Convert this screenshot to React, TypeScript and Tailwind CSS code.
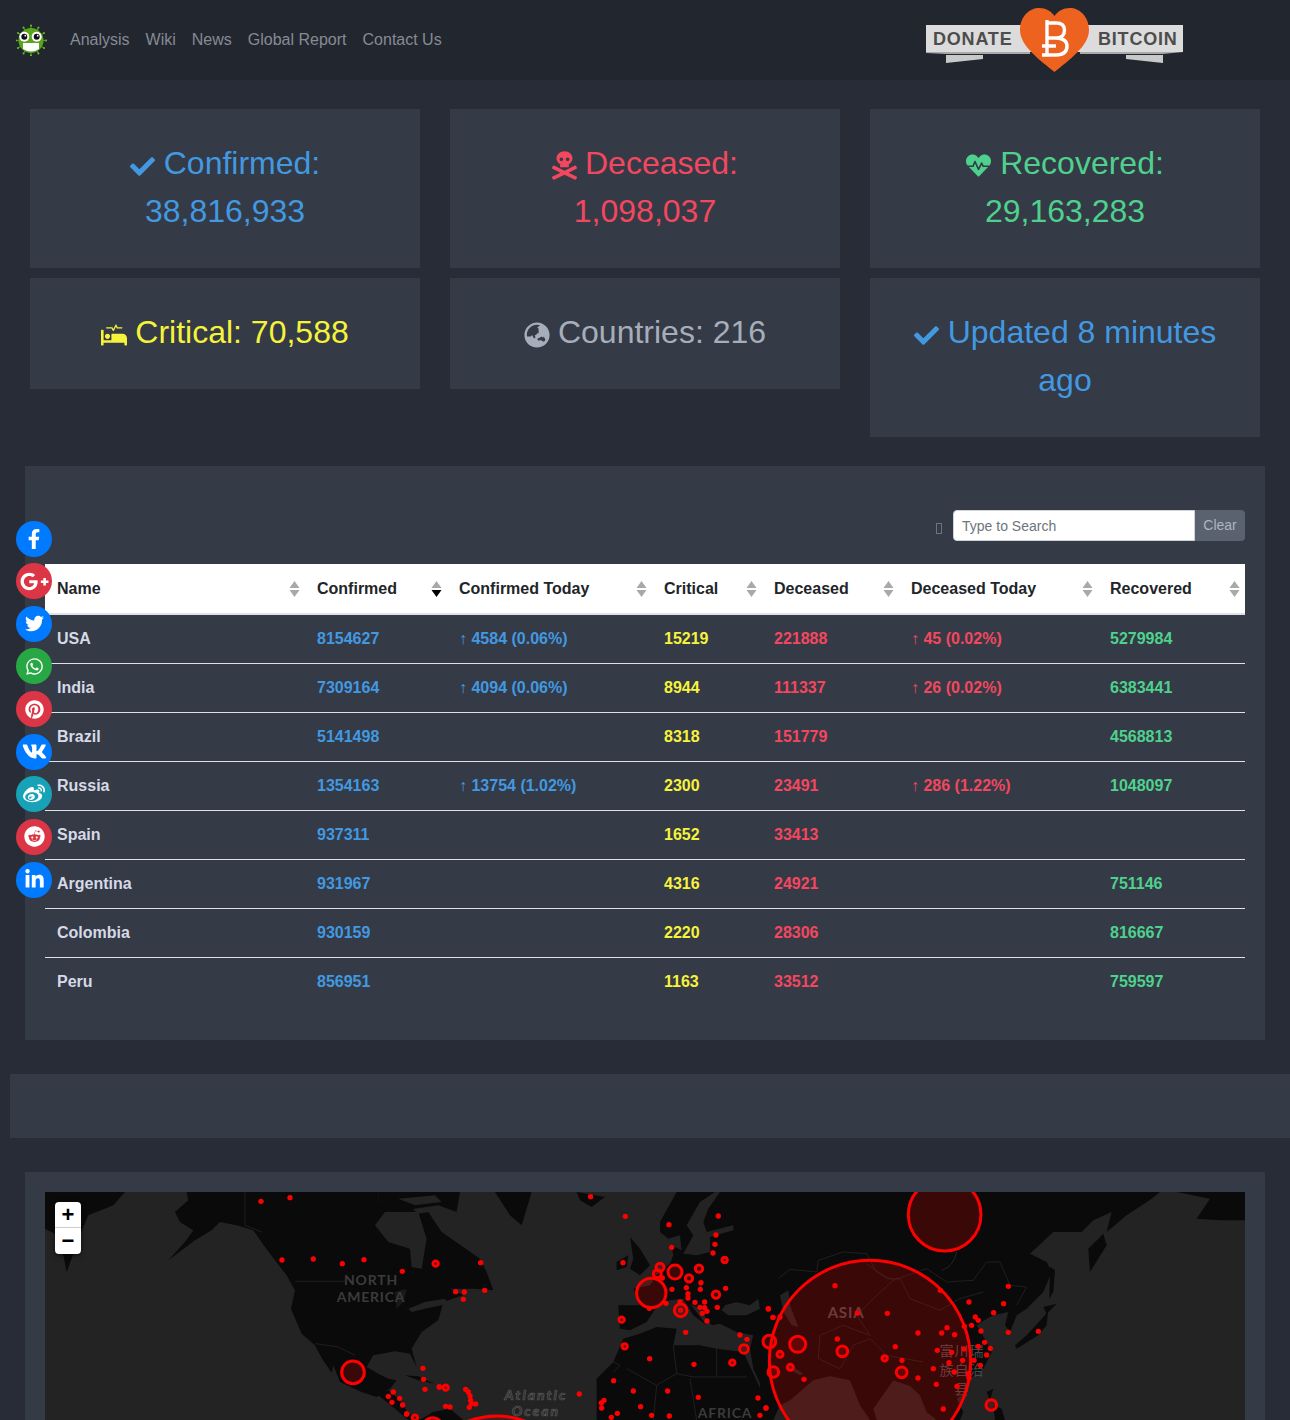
// App.tsx
import type { ReactNode } from "react";
import {
  FaCheck,
  FaFacebookF,
  FaGlobeAsia,
  FaGooglePlusG,
  FaHeartbeat,
  FaLinkedinIn,
  FaPinterest,
  FaProcedures,
  FaReddit,
  FaSkullCrossbones,
  FaTwitter,
  FaVk,
  FaWeibo,
  FaWhatsapp,
} from "react-icons/fa";

const socials = [
  { icon: <FaFacebookF size={20} />, bg: "bg-[#007bff]" },
  { icon: <FaGooglePlusG size={29} />, bg: "bg-[#dc3545]" },
  { icon: <FaTwitter size={19} />, bg: "bg-[#007bff]" },
  { icon: <FaWhatsapp size={19} />, bg: "bg-[#28a745]" },
  { icon: <FaPinterest size={19} />, bg: "bg-[#dc3545]" },
  { icon: <FaVk size={25} />, bg: "bg-[#007bff]" },
  { icon: <FaWeibo size={22} />, bg: "bg-[#17a2b8]" },
  { icon: <FaReddit size={21} />, bg: "bg-[#dc3545]" },
  { icon: <FaLinkedinIn size={21} />, bg: "bg-[#007bff]" },
];

const rows = [
  ["USA", "8154627", "↑ 4584 (0.06%)", "15219", "221888", "↑ 45 (0.02%)", "5279984"],
  ["India", "7309164", "↑ 4094 (0.06%)", "8944", "111337", "↑ 26 (0.02%)", "6383441"],
  ["Brazil", "5141498", "", "8318", "151779", "", "4568813"],
  ["Russia", "1354163", "↑ 13754 (1.02%)", "2300", "23491", "↑ 286 (1.22%)", "1048097"],
  ["Spain", "937311", "", "1652", "33413", "", ""],
  ["Argentina", "931967", "", "4316", "24921", "", "751146"],
  ["Colombia", "930159", "", "2220", "28306", "", "816667"],
  ["Peru", "856951", "", "1163", "33512", "", "759597"],
];

const headers = [
  { label: "Name", w: "w-[260px]" },
  { label: "Confirmed", w: "w-[142px]", active: true },
  { label: "Confirmed Today", w: "w-[205px]" },
  { label: "Critical", w: "w-[110px]" },
  { label: "Deceased", w: "w-[137px]" },
  { label: "Deceased Today", w: "w-[199px]" },
  { label: "Recovered", w: "w-[147px]" },
];

const cellColors = [
  "text-[#d6d9e6]",
  "text-[#4299e1]",
  "text-[#4299e1]",
  "text-[#f6f33c]",
  "text-[#f3475f]",
  "text-[#f3475f]",
  "text-[#4fd18e]",
];

// marker positions are in the 3x crop space of each map section
const dotsWest = [
  [648, 28], [735, 17], [711, 204], [805, 201], [892, 215], [957, 203], [1072, 238],
  [1134, 529], [1136, 562], [1140, 592], [1183, 585], [1030, 613], [1045, 600],
  [1064, 619], [1041, 631], [1073, 639], [1085, 666],
];
const dotsMid = [
  [572, 14], [676, 73], [807, 98], [955, 72], [948, 129], [945, 157], [939, 183], [815, 166],
  [669, 212], [242, 212], [167, 299], [193, 300], [254, 295], [190, 322], [538, 606],
  [749, 500], [641, 566], [700, 597], [803, 597], [895, 616], [882, 517], [1020, 429],
  [1041, 442], [1105, 350], [1119, 376], [722, 644], [755, 670], [808, 672], [652, 664],
  [612, 625], [604, 633], [605, 648], [634, 676], [1074, 618], [1098, 648], [1080, 670],
  [197, 592], [205, 600], [210, 612], [212, 625], [214, 635], [208, 646], [227, 636],
  [137, 643], [150, 645], [118, 585], [816, 292], [859, 287], [901, 292], [903, 272],
  [885, 331], [914, 330], [900, 346], [914, 347], [921, 358], [907, 364], [952, 346],
  [977, 289], [921, 387], [857, 421], [864, 305], [864, 318], [798, 334], [840, 330],
  [787, 258], [748, 349], [20, 666],
];
const dotsEast = [
  [225, 281], [292, 363], [382, 364], [25, 351], [39, 376], [60, 375], [232, 441], [132, 562],
  [406, 464], [426, 505], [474, 423], [545, 423], [561, 407], [584, 428], [532, 475],
  [575, 481], [612, 471], [655, 463], [674, 451], [691, 469], [680, 489], [642, 505],
  [661, 520], [608, 505], [567, 512], [583, 540], [520, 530], [474, 558], [529, 577],
  [591, 583], [550, 651], [625, 545], [627, 557], [613, 403], [635, 400], [663, 417],
  [646, 375], [655, 385], [701, 362], [731, 335], [745, 283], [627, 330], [541, 295],
  [745, 421], [835, 418], [18, 648],
];
const ringsWest = [[924, 541, 34], [1172, 215, 8], [1110, 677, 8], [1163, 705, 28]];
const ringsMid = [
  [754, 303, 44], [825, 240, 21], [780, 226, 12], [772, 245, 12], [867, 259, 11], [897, 230, 11],
  [974, 204, 8], [948, 308, 11], [842, 355, 19], [842, 355, 3], [665, 383, 8], [674, 463, 8],
  [997, 512, 8], [137, 587, 8], [1032, 471, 13], [290, 912, 240],
];
const ringsEast = [
  [330, 507, 302], [554, 68, 109], [113, 457, 24], [247, 478, 16], [28, 449, 19], [40, 540, 16],
  [425, 541, 16], [694, 639, 16], [374, 499, 8], [91, 526, 9], [60, 487, 9],
];

function Card({ color, className = "", children }: { color: string; className?: string; children: ReactNode }) {
  return (
    <div className={`bg-[#343a46] px-4 pt-[30px] pb-[33px] text-center text-[32px] leading-[48px] ${color} ${className}`}>
      {children}
    </div>
  );
}

function SortArrows({ active }: { active?: boolean }) {
  return (
    <svg width="11" height="16" viewBox="0 0 11 16" className="absolute right-[5.5px] top-[17px]">
      <path d="M5.5 0 L10.5 7 H0.5 Z" fill="#a9a9a9" />
      <path d="M5.5 16 L10.5 9 H0.5 Z" fill={active ? "#000" : "#a9a9a9"} />
    </svg>
  );
}

function VirusLogo() {
  const spikes = [0, 30, 60, 90, 120, 150, 180, 210, 240, 270, 300, 330];
  return (
    <svg width="32" height="32" viewBox="0 0 32 32">
      {spikes.map((a) => (
        <g key={a} transform={`rotate(${a} 15 16.5)`}>
          <rect x="14.4" y="1" width="1.2" height="4" fill="#4d9a1b" />
          <circle cx="15" cy="1.5" r="1" fill="#6fb52a" />
        </g>
      ))}
      <circle cx="15" cy="16.5" r="12.5" fill="#5aa51e" />
      <circle cx="8.3" cy="12.7" r="5" fill="#fff" />
      <circle cx="20.7" cy="12.7" r="5" fill="#fff" />
      <circle cx="8.3" cy="12.7" r="3" fill="#111" />
      <circle cx="20.7" cy="12.7" r="3" fill="#111" />
      <circle cx="9.3" cy="11.7" r="0.9" fill="#fff" />
      <circle cx="21.7" cy="11.7" r="0.9" fill="#fff" />
      <path d="M7 19 L23 19 L23 25 Q15 30 7 25 Z" fill="#fff" />
    </svg>
  );
}

function DonateBadge() {
  return (
    <svg width="300" height="80" viewBox="0 0 300 80" className="ml-auto shrink-0">
      <path d="M46 55 H83 V59 L46 63 Z" fill="#c9c9c9" />
      <path d="M226 55 H263 V63 L226 59 Z" fill="#c9c9c9" />
      <rect x="26" y="25" width="110" height="27" fill="#dcdcdc" />
      <rect x="175" y="25" width="108" height="27" fill="#dcdcdc" />
      <path d="M26 52 H130 V54 H46 L26 53 Z" fill="#a9a9a9" />
      <path d="M180 52 H283 L263 54 H180 Z" fill="#a9a9a9" />
      <text x="33" y="45" fontFamily="Liberation Sans, sans-serif" fontWeight="700" fontSize="18" letterSpacing="0.8" fill="#4d4d4d">DONATE</text>
      <text x="198" y="45" fontFamily="Liberation Sans, sans-serif" fontWeight="700" fontSize="18" letterSpacing="0.8" fill="#4d4d4d">BITCOIN</text>
      <path d="M154.5 72 C140 60 120 46 120 30 C120 16 130 8 139 8 C146 8 151 11 154.5 16 C158 11 163 8 170 8 C179 8 189 16 189 30 C189 46 169 60 154.5 72 Z" fill="#ee621f" />
      <path d="M147 20 V54 M147 23 H156 Q164.5 23 164.5 30 Q164.5 38 156 38 H147 M156 38 Q167 38.5 167 46 Q167 55 156 55 H142 M142 46 H156" fill="none" stroke="#fff" strokeWidth="3.4" />
    </svg>
  );
}

function WorldMap() {
  const land = "#0a0a0a";
  const sea = "#232323";
  const line = "#2b2b2b";
  return (
    <svg viewBox="0 0 1200 228" className="block h-[228px] w-[1200px]">
      <rect width="1200" height="228" fill={sea} />

      {/* North America and the far east edge */}
      <g transform="scale(0.3333)" fill={land}>
        <path d="M0 0 H240 L205 40 L130 70 L105 130 L65 240 L55 190 L30 125 L0 110 Z" />
        <path d="M425 0 L430 25 L390 60 L405 90 L445 115 L420 150 L370 205 L450 145 L500 115 L525 90 L575 100 L625 115 L660 165 L690 205 L725 250 L750 295 L738 350 L770 425 L810 460 L830 505 L860 545 L865 520 L885 570 L950 600 L995 615 L1035 590 L1055 565 L1030 560 L1000 545 L965 525 L985 490 L1050 478 L1095 485 L1115 525 L1100 470 L1130 420 L1180 385 L1195 330 L1255 310 L1215 290 L1285 290 L1345 295 L1325 240 L1305 200 L1255 165 L1190 120 L1150 60 L1120 65 L1090 40 L1000 30 L1000 0 Z" />
        <path d="M1000 0 H1245 L1235 60 L1180 40 L1110 50 L1060 60 L1000 40 Z" />
        <path d="M1000 610 L1030 595 L1060 620 L1075 640 L1090 665 L1130 684 L1090 684 L1050 650 Z" />
        <path d="M1080 550 L1120 553 L1168 575 L1120 565 Z" />
        <path d="M1125 684 L1165 660 L1215 650 L1255 684 Z" />
        <path d="M990 100 L1020 60 L1120 60 L1145 140 L1130 230 L1100 225 L1095 170 L1030 150 Z" fill={sea} />
        <path d="M1060 20 L1170 10 L1190 30 L1110 40 Z" fill={sea} />
        <path d="M1090 350 L1140 330 L1200 320 L1210 335 L1140 350 L1100 360 Z" fill={sea} />
        <path d="M1050 300 L1085 290 L1075 330 L1055 350 Z" fill="#1a1a1a" />
        <path d="M810 465 L835 510 L860 545 L830 505 Z" fill={sea} stroke={sea} strokeWidth="4" />
        <path d="M750 268 H900 M600 0 V100 L650 120 M810 455 L880 465 L930 490" fill="none" stroke={line} strokeWidth="2" />
      </g>

      {/* Atlantic side, Europe and Africa */}
      <g transform="translate(355 0) scale(0.3333)" fill={land}>
        <path d="M285 0 H395 L365 100 L330 70 Z" />
        <path d="M530 0 L615 15 L575 45 L540 25 Z" />
        <path d="M690 135 L720 170 L750 220 L720 250 L690 230 L700 200 Z" />
        <path d="M650 210 L685 190 L680 225 L650 235 Z" />
        <path d="M780 90 L830 0 H1200 V684 H1130 L1060 530 L1050 470 L1060 430 L1010 420 L960 395 L935 400 L920 380 L900 350 L870 335 L920 400 L880 370 L850 320 L810 325 L770 345 L740 390 L690 415 L660 410 L655 340 L720 340 L700 290 L750 280 L770 250 L810 215 L820 190 L815 160 L845 175 L840 130 L805 140 L780 120 Z" />
        <path d="M590 684 V560 L640 510 L670 440 L720 425 L770 405 L830 410 L820 460 L900 460 L950 470 L1030 480 L1125 684 Z" />
        <path d="M850 185 L880 130 L860 100 L900 30 L945 0 H960 L925 50 L910 90 L920 120 L1000 100 L1000 115 L930 135 L930 180 L890 190 Z" fill={sea} />
        <path d="M975 340 L1010 330 L1050 340 L1075 320 L1080 350 L1040 370 L985 370 L965 355 Z" fill={sea} />
        <path d="M640 510 L660 520 L640 540 M680 530 L770 580 L830 545 L880 555 L950 555 M820 460 L830 545 M950 470 V555 M770 580 L760 684 M870 560 L890 684 M950 555 H1040" fill="none" stroke={line} strokeWidth="2" />
      </g>

      {/* Asia and the north west Pacific */}
      <g transform="translate(715 0) scale(0.3333)" fill={land}>
        <path d="M0 0 H1200 L1175 20 L1100 70 L1040 120 L1055 60 L1000 85 L965 120 L880 120 L810 185 L860 210 L875 240 L850 300 L800 350 L770 370 L750 420 L735 400 L745 360 L700 370 L680 380 L650 400 L680 450 L695 480 L670 530 L630 560 L605 610 L590 620 L610 660 L600 684 H0 Z" />
        <path d="M1200 0 H1455 V85 L1380 85 L1310 80 L1350 20 L1250 0 Z" />
        <path d="M985 170 L1030 125 L1040 160 L990 240 Z" />
        <path d="M870 225 L885 235 L880 300 L868 320 Z" />
        <path d="M850 345 L890 335 L860 365 Z" />
        <path d="M765 460 L800 430 L855 370 L865 350 L860 400 L835 430 L770 470 Z" />
        <path d="M680 600 L700 590 L690 625 Z" />
        <path d="M700 640 L725 650 L735 684 H705 Z" />
        <path d="M90 625 L160 565 L210 552 L270 565 L300 640 L330 684 H40 L60 640 Z" fill={sea} />
        <path d="M340 650 L400 565 L450 582 L480 610 L500 660 L530 684 H350 Z" fill={sea} />
        <path d="M60 310 L85 295 L90 340 L115 405 L95 400 L70 360 Z" fill={sea} />
        <path d="M85 515 L130 545 L120 550 L85 530 Z" fill={sea} />
        <path d="M545 235 Q580 225 590 180" fill="none" stroke={sea} strokeWidth="3" />
        <path d="M55 260 L90 232 L170 240 L175 205 L250 180 L320 185 L350 240 L400 265 L500 230 L560 270 L640 265 L680 210 L720 210 L750 280 L800 285 L770 340 M320 215 L380 260 L420 260 L450 320 L540 355 L600 320 L670 300 M180 430 L250 400 L330 430 L290 370 L340 320 L400 265 M180 430 L175 500 L240 530 L280 460 L330 440 L380 490 L490 510" fill="none" stroke={line} strokeWidth="2" />
      </g>

      <g fontFamily="Lato, sans-serif" fontWeight="700" fontSize="14" letterSpacing="0.8" fill="#3b3b3b" textAnchor="middle">
        <text x="326" y="93">NORTH</text>
        <text x="326" y="110">AMERICA</text>
        <text x="801" y="126" fontSize="15" fill="#4a4a4a">ASIA</text>
        <text x="680" y="226">AFRICA</text>
      </g>
      <g fontFamily="Lato, sans-serif" fontStyle="italic" fontWeight="700" fontSize="14" letterSpacing="2" fill="#2a2a2a" stroke="#585858" strokeWidth="0.7" textAnchor="middle">
        <text x="491" y="208">Atlantic</text>
        <text x="491" y="224">Ocean</text>
      </g>
      <g fontFamily="'Noto Sans CJK SC', sans-serif" fontSize="14" letterSpacing="1" fill="#4a4a4a" textAnchor="middle">
        <text x="917" y="164">富川瑞</text>
        <text x="917" y="183">族自治</text>
        <text x="917" y="202">县</text>
      </g>

      <g fill="#ff0000">
        <g transform="scale(0.3333)">
          {dotsWest.map(([x, y]) => <circle key={`${x}-${y}`} cx={x} cy={y} r="8" />)}
          {ringsWest.map(([x, y, r]) => <circle key={`${x}-${y}-${r}`} cx={x} cy={y} r={r} fillOpacity="0.2" stroke="#ff0000" strokeWidth="9" />)}
        </g>
        <g transform="translate(355 0) scale(0.3333)">
          {dotsMid.map(([x, y]) => <circle key={`${x}-${y}`} cx={x} cy={y} r="8" />)}
          {ringsMid.map(([x, y, r]) => <circle key={`${x}-${y}-${r}`} cx={x} cy={y} r={r} fillOpacity="0.2" stroke="#ff0000" strokeWidth="9" />)}
        </g>
        <g transform="translate(715 0) scale(0.3333)">
          {ringsEast.map(([x, y, r]) => <circle key={`${x}-${y}-${r}`} cx={x} cy={y} r={r} fillOpacity="0.2" stroke="#ff0000" strokeWidth="9" />)}
          {dotsEast.map(([x, y]) => <circle key={`${x}-${y}`} cx={x} cy={y} r="8" />)}
        </g>
      </g>
    </svg>
  );
}

export default function App() {
  return (
    <div className="relative h-[1420px] overflow-hidden bg-[#272c36] font-['Liberation_Sans',sans-serif]">
      <nav className="flex h-20 items-center bg-[#22262f] pl-4 pr-[90px]">
        <VirusLogo />
        <div className="ml-[14px] flex text-base text-[#868b94]">
          <a className="px-2">Analysis</a>
          <a className="px-2">Wiki</a>
          <a className="px-2">News</a>
          <a className="px-2">Global Report</a>
          <a className="px-2">Contact Us</a>
        </div>
        <DonateBadge />
      </nav>

      <div className="absolute left-4 top-[520.5px] z-10 flex flex-col gap-[6.65px]">
        {socials.map((s, i) => (
          <div key={i} className={`flex h-9 w-9 items-center justify-center rounded-full text-white ${s.bg}`}>
            {s.icon}
          </div>
        ))}
      </div>

      <section className="grid grid-cols-3 items-start gap-x-[30px] gap-y-[10px] px-[30px] pt-[29px]">
        <Card color="text-[#4299e1]">
          <FaCheck className="mr-[9px] inline-block align-[-5px]" size={25} />
          Confirmed:
          <br />
          38,816,933
        </Card>
        <Card color="text-[#f3475f]">
          <FaSkullCrossbones className="mr-2 inline-block h-[29px] w-[25px] align-[-6px]" />
          Deceased:
          <br />
          1,098,037
        </Card>
        <Card color="text-[#4fd18e]">
          <FaHeartbeat className="mr-[9px] inline-block align-[-4px]" size={25} />
          Recovered:
          <br />
          29,163,283
        </Card>
        <Card color="text-[#f6f33c]">
          <FaProcedures className="mr-2 inline-block align-[-5px]" size={26} />
          Critical: 70,588
        </Card>
        <Card color="text-[#a7aebb]">
          <FaGlobeAsia className="mr-2 inline-block align-[-5px]" size={26} />
          Countries: 216
        </Card>
        <Card color="text-[#4299e1]">
          <FaCheck className="mr-[9px] inline-block align-[-5px]" size={25} />
          Updated 8 minutes ago
        </Card>
      </section>

      <section className="mx-[25px] mt-[29px] bg-[#343a46] px-5 pb-[34px] pt-11">
        <div className="flex h-[31px] items-center justify-end">
          <span className="mr-[11px] mt-[5px] h-[11px] w-[6px] border border-[#6c7480]" />
          <input
            placeholder="Type to Search"
            className="h-[31px] w-[242px] rounded-l border border-[#ced4da] bg-white px-2 text-sm text-[#212529] placeholder:text-[#6c757d] outline-none"
          />
          <button className="h-[31px] w-[50px] rounded-r bg-[#5a6270] pb-[2px] text-sm text-[#adb5bd]">Clear</button>
        </div>
        <table className="mt-[23px] w-[1200px] table-fixed border-collapse text-base font-bold">
          <thead>
            <tr className="h-[50px] border-b-2 border-[#dee2e6] bg-white text-left text-[#212529]">
              {headers.map((h) => (
                <th key={h.label} className={`relative px-3 font-bold ${h.w}`}>
                  {h.label}
                  <SortArrows active={h.active} />
                </th>
              ))}
            </tr>
          </thead>
          <tbody>
            {rows.map((row) => (
              <tr key={row[0]} className="h-[49px] border-b border-[#dee2e6] last:border-b-0">
                {row.map((cell, i) => (
                  <td key={i} className={`px-3 ${cellColors[i]}`}>
                    {cell}
                  </td>
                ))}
              </tr>
            ))}
          </tbody>
        </table>
      </section>

      <div className="ml-[10px] mt-[34px] h-16 bg-[#343a46]" />

      <section className="mx-[25px] mt-[34px] bg-[#343a46] px-5 pt-5">
        <div className="relative h-[228px] overflow-hidden">
          <WorldMap />
          <div className="absolute left-[10px] top-[10px] w-[26px] overflow-hidden rounded bg-white text-center text-[22px] font-bold leading-[26px] text-black shadow-[0_1px_5px_rgba(0,0,0,0.65)]">
            <div className="h-[26px] border-b border-[#ccc]">+</div>
            <div className="h-[26px]">−</div>
          </div>
        </div>
      </section>
    </div>
  );
}
